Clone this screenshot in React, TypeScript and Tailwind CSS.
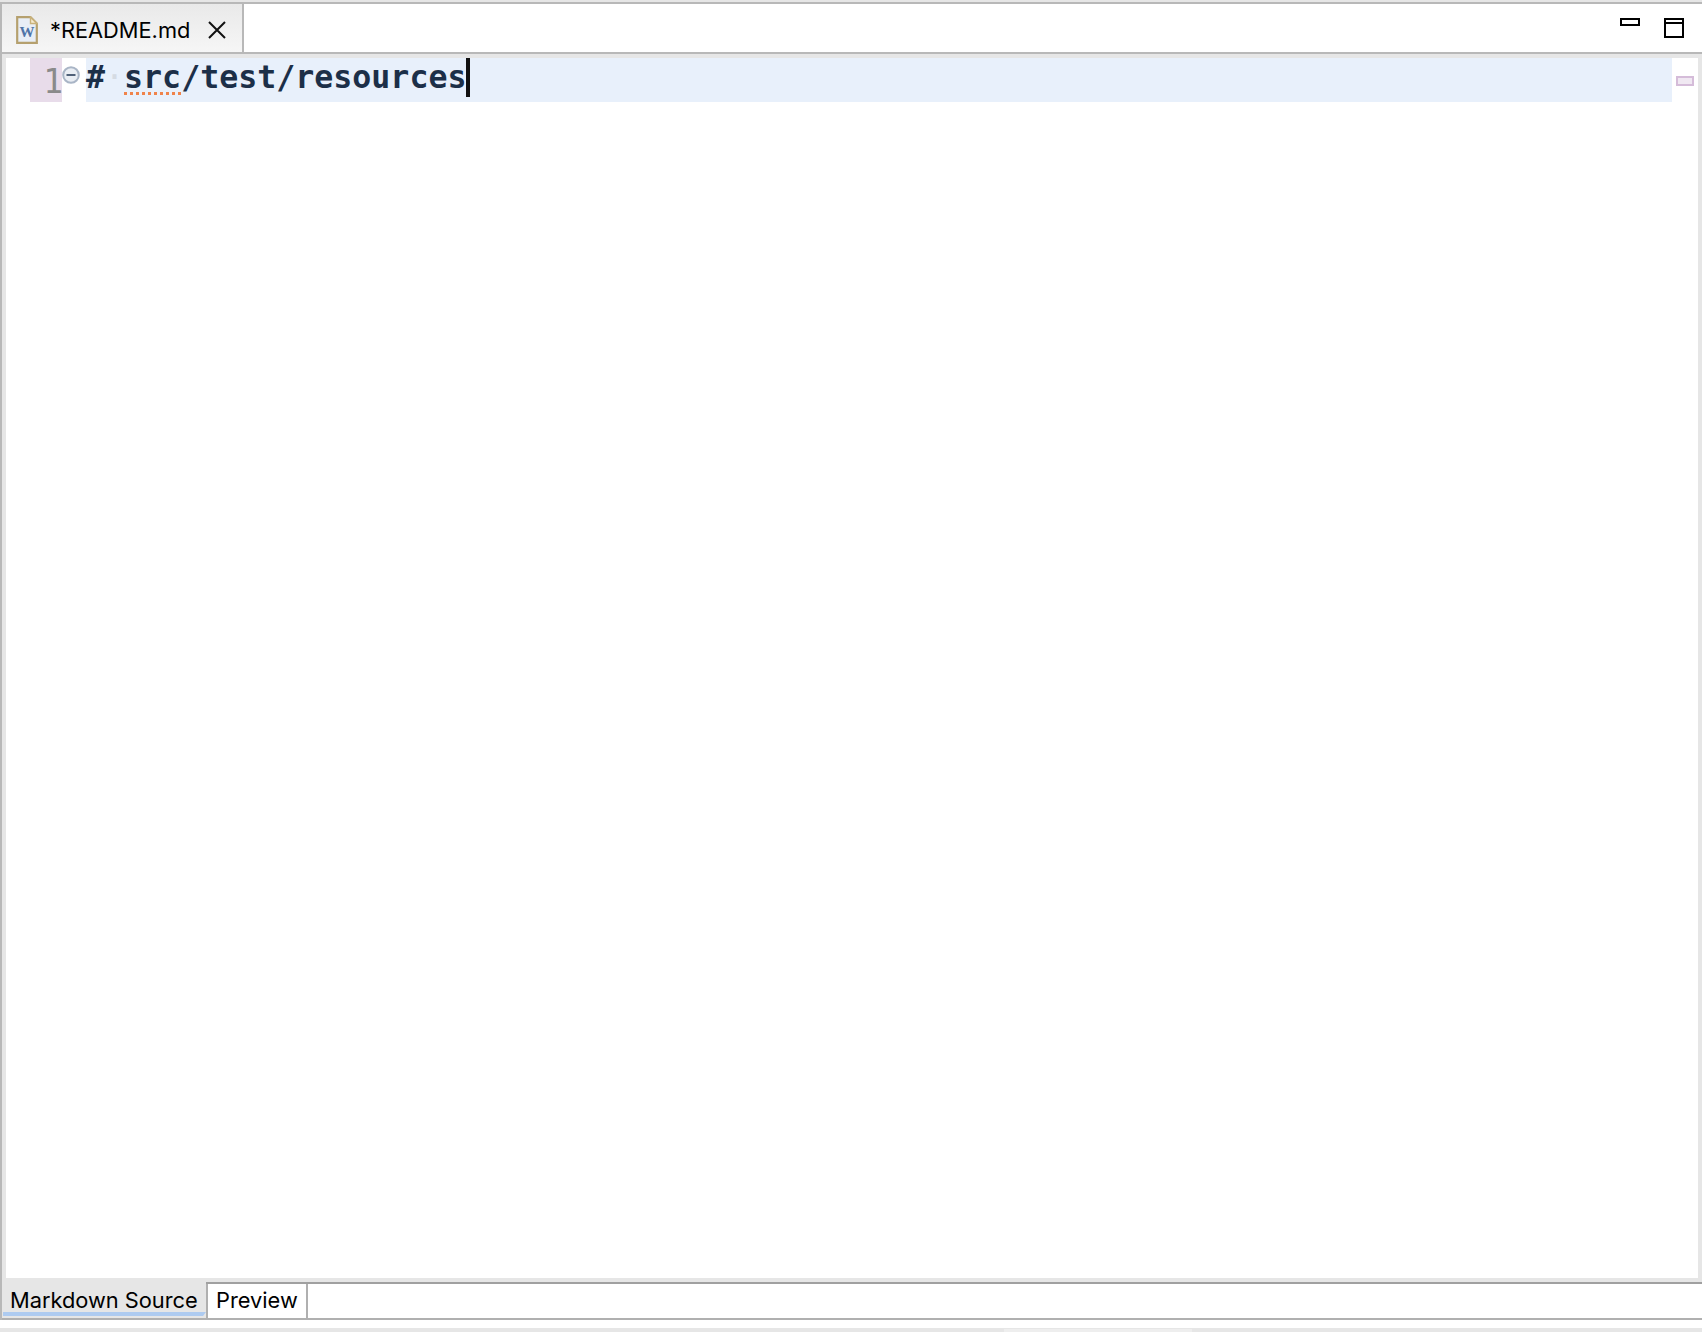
export default function App() {
  return (
    <div className="h-[1332px] w-[1702px] overflow-hidden flex flex-col bg-[#e6e6e6] font-['Inter',sans-serif] text-black">
      {/* Editor folder */}
      <div className="mt-[2px] flex-1 flex flex-col border-l-2 border-t-2 border-[#b8b8b8]">
        {/* Title tabs */}
        <div className="h-[50px] flex bg-white border-b-2 border-[#b8b8b8]">
          <div className="w-[242px] h-[48px] flex items-center pl-[14px] pt-[4px] bg-gradient-to-b from-[#e9e9e9] to-[#f6f6f6] border-r-2 border-[#b8b8b8]">
            <DocIcon />
            <span className="ml-[12px] mt-[1px] text-[21.8px] leading-none">*README.md</span>
            <svg className="ml-[17px]" width="20" height="20" viewBox="0 0 20 20" fill="none" stroke="#111" strokeWidth="2">
              <path d="M2 2 L18 18 M18 2 L2 18" />
            </svg>
          </div>
          <div className="flex-1 flex justify-end items-start">
            <div className="mt-[14px] mr-[24px] w-[20px] h-[8px] border-2 border-black" />
            <div className="mt-[14px] mr-[18px] w-[20px] h-[20px] border-2 border-black flex flex-col">
              <div className="h-[4px] border-b-2 border-black" />
            </div>
          </div>
        </div>

        {/* Source view */}
        <div className="flex-1 p-[4px] flex">
          <div className="flex-1 bg-white flex">
            <div className="w-[24px]" />
            <div className="w-[32px] h-[44px] bg-[#e8dcea] flex justify-end items-start">
              <span className="text-[33px] leading-[44px] text-[#8a8a8a] font-['DejaVu_Sans_Mono',monospace] mt-[2px] mr-[-1px]">1</span>
            </div>
            <div className="w-[24px] pt-[8px]">
              <svg width="18" height="18" viewBox="0 0 18 18">
                <circle cx="9" cy="9" r="7.8" fill="#e9edf3" stroke="#a9b5c6" strokeWidth="2" />
                <path d="M4.5 9 H13.5" stroke="#4f6078" strokeWidth="2" />
              </svg>
            </div>
            <div className="w-[1586px] h-[44px] bg-[#e8f0fb] flex items-start">
              <span className="text-[31.6px] leading-[38px] font-bold text-[#1c2f48] font-['DejaVu_Sans_Mono',monospace] whitespace-pre">
                #<span className="text-[#d5dbe3] font-normal">·</span><span className="underline decoration-dotted decoration-[#f0834a] decoration-[3px] underline-offset-[4px]">src</span>/test/resources
              </span>
              <div className="w-[4px] h-[39px] bg-[#111111]" />
            </div>
            <div className="flex-1 flex justify-end pt-[18px] pr-[4px]">
              <div className="w-[18px] h-[10px] bg-[#f0e8f2] border-2 border-[#d5bcd9]" />
            </div>
          </div>
        </div>

        {/* Page tabs */}
        <div className="h-[38px] flex border-b-2 border-[#b0b0b0] bg-white">
          <div className="w-[204px] h-[36px] bg-[#e6e6e6] flex flex-col">
            <div className="h-[30px] pl-[8px] pt-[8px] flex items-center">
              <span className="text-[21.8px] leading-none">Markdown Source</span>
            </div>
            <div className="h-[4px] ml-[1px] bg-[#aecbf0] [clip-path:polygon(0_0,100%_0,calc(100%-3px)_100%,0_100%)]" />
          </div>
          <div className="flex-1 flex border-t-2 border-[#a0a0a0]">
            <div className="w-[102px] h-[34px] border-l-2 border-r-2 border-[#b0b0b0] pl-[8px] flex items-center">
              <span className="text-[21.8px] leading-none">Preview</span>
            </div>
          </div>
        </div>
      </div>

      {/* Status strip */}
      <div className="h-[12px] bg-white flex flex-col justify-end">
        <div className="h-[4px] bg-[#e6e6e6] flex">
          <div className="ml-[1004px] mt-[1px] w-[188px] bg-[#eeeeee]" />
        </div>
      </div>
    </div>
  );
}

function DocIcon() {
  return (
    <svg width="22" height="28" viewBox="0 0 22 28" className="shrink-0">
      <path d="M1.2 1.2 H14.5 L20.8 7.5 V26.8 H1.2 Z" fill="#e8eef6" stroke="#b5a06e" strokeWidth="2.2" />
      <path d="M14.5 1.2 V7.5 H20.8 Z" fill="#f6ecd2" stroke="#c9b27c" strokeWidth="1.4" />
      <text x="11" y="21" textAnchor="middle" fontSize="15" fontWeight="bold" fill="#4f74a8" fontFamily="Liberation Serif, serif">W</text>
    </svg>
  );
}
